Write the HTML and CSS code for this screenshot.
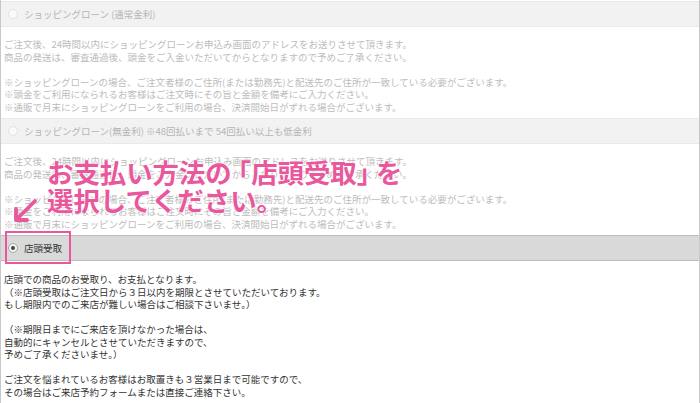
FILE: index.html
```html
<!DOCTYPE html>
<html lang="ja">
<head>
<meta charset="utf-8">
<link rel="stylesheet" href="styles.css">
</head>
<body>
<div class="page">
  <div class="opt dim">
    <div class="opt-head"><span class="radio"></span><span>ショッピングローン (通常金利)</span></div>
    <div class="opt-body">
      <p>ご注文後、24時間以内にショッピングローンお申込み画面のアドレスをお送りさせて頂きます。<br>商品の発送は、審査通過後、頭金をご入金いただいてからとなりますので予めご了承ください。</p>
      <p>※ショッピングローンの場合、ご注文者様のご住所(または勤務先)と配送先のご住所が一致している必要がございます。<br>※頭金をご利用になられるお客様はご注文時にその旨と金額を備考にご入力ください。<br>※通販で月末にショッピングローンをご利用の場合、決済開始日がずれる場合がございます。</p>
    </div>
  </div>
  <div class="opt dim">
    <div class="opt-head"><span class="radio"></span><span>ショッピングローン(無金利) ※48回払いまで 54回払い以上も低金利</span></div>
    <div class="opt-body">
      <p>ご注文後、24時間以内にショッピングローンお申込み画面のアドレスをお送りさせて頂きます。<br>商品の発送は、審査通過後、頭金をご入金いただいてからとなりますので予めご了承ください。</p>
      <p>※ショッピングローンの場合、ご注文者様のご住所(または勤務先)と配送先のご住所が一致している必要がございます。<br>※頭金をご利用になられるお客様はご注文時にその旨と金額を備考にご入力ください。<br>※通販で月末にショッピングローンをご利用の場合、決済開始日がずれる場合がございます。</p>
    </div>
  </div>
  <div class="opt active">
    <div class="opt-head"><span class="radio checked"></span><span>店頭受取</span></div>
    <div class="opt-body">
      <p>店頭での商品のお受取り、お支払となります。<br>（※店頭受取はご注文日から３日以内を期限とさせていただいております。<br>もし期限内でのご来店が難しい場合はご相談下さいませ。）</p>
      <p>（※期限日までにご来店を頂けなかった場合は、<br>自動的にキャンセルとさせていただきますので、<br>予めご了承くださいませ。）</p>
      <p>ご注文を悩まれているお客様はお取置きも３営業日まで可能ですので、<br>その場合はご来店予約フォームまたは直接ご連絡下さい。</p>
    </div>
  </div>

  <div class="callout">お支払い方法の<span class="bo">「</span>店頭受取<span class="bc">」</span>を<br>選択してください。</div>
  <svg class="arrow" width="30" height="30" viewBox="0 0 30 30">
    <path d="M25 4 L7 22" stroke="#e9579c" stroke-width="3.8" stroke-linecap="round" fill="none"/>
    <path d="M6 12 L6 23 L17 23" stroke="#e9579c" stroke-width="3.8" stroke-linecap="round" stroke-linejoin="round" fill="none"/>
  </svg>
  <div class="highlight"></div>
</div>
</body>
</html>
```
FILE: styles.css
```css
html, body {
  margin: 0;
  padding: 0;
  background: #fff;
}
body {
  font-family: "Noto Sans CJK JP", "Noto Sans", sans-serif;
  font-size: 9.5px;
  line-height: 12.5px;
  color: #333;
}
.page {
  position: relative;
  width: 698px;
  height: 403px;
  overflow: hidden;
  padding-top: 1px;
  border-left: 1px solid #c8c8c8;
  border-right: 1px solid #c8c8c8;
}
.opt-head {
  display: flex;
  align-items: center;
  height: 24px;
  padding-left: 7px;
  border-top: 1px solid #bdbdbd;
  border-bottom: 1px solid #bdbdbd;
  background: #d9d9d9;
}
.radio {
  box-sizing: border-box;
  width: 10px;
  height: 10px;
  border-radius: 50%;
  border: 1px solid #a8a8a8;
  background: #f4f4f4;
  margin-right: 6px;
  position: relative;
}
.radio.checked::after {
  content: "";
  position: absolute;
  left: 2px;
  top: 2px;
  width: 4px;
  height: 4px;
  border-radius: 50%;
  background: #444;
}
.opt-body {
  padding: 11px 3px 5px;
}
.opt-body p {
  margin: 0 0 12.5px;
}
.opt-body p:last-child {
  margin-bottom: 0;
}
.dim .opt-head {
  background: #f2f2f2;
  border-color: #e9e9e9;
  color: #b5b5b5;
}
.dim .radio {
  border-color: #e2e2e2;
  background: #fafafa;
}
.dim .opt-body {
  color: #bcbcbc;
}
.active .opt-body {
  padding-top: 12px;
}
.callout {
  position: absolute;
  left: 46px;
  top: 158px;
  font-size: 26.4px;
  line-height: 28px;
  font-weight: 700;
  color: #e9579c;
  white-space: nowrap;
  text-shadow: 0 0 2px #fff, 0 0 2px #fff, 0 0 1px #fff;
}
.bo {
  margin-left: -7px;
}
.bc {
  letter-spacing: -7px;
}
.arrow {
  position: absolute;
  left: 9px;
  top: 197px;
}
.highlight {
  position: absolute;
  left: 4px;
  top: 231px;
  width: 62px;
  height: 29px;
  border: 2px solid #e9579c;
}
```
